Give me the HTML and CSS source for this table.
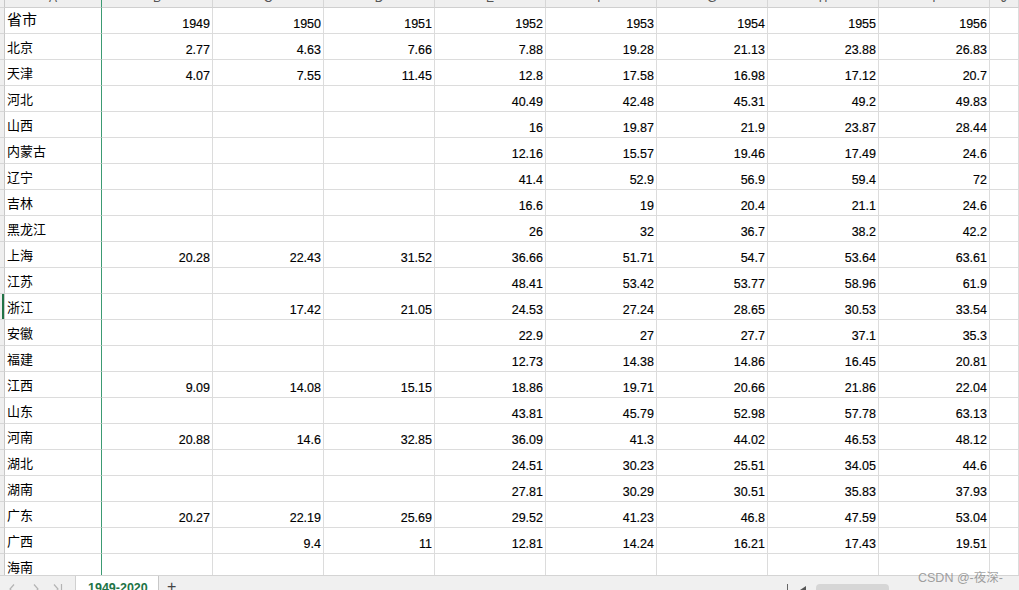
FILE: index.html
```html
<!DOCTYPE html>
<html lang="zh">
<head>
<meta charset="utf-8">
<title>1949-2020</title>
<link rel="stylesheet" href="styles.css">
</head>
<body>
<div class="sheet">
  <div class="h g"></div><div class="h fz"><span>A</span></div><div class="h"><span>B</span></div><div class="h"><span>C</span></div><div class="h"><span>D</span></div><div class="h"><span>E</span></div><div class="h"><span>F</span></div><div class="h"><span>G</span></div><div class="h"><span>H</span></div><div class="h"><span>I</span></div><div class="h"><span>J</span></div>

  <div class="g"></div><div class="a big">省市</div><div class="n">1949</div><div class="n">1950</div><div class="n">1951</div><div class="n">1952</div><div class="n">1953</div><div class="n">1954</div><div class="n">1955</div><div class="n">1956</div><div class="n"></div>
  <div class="g"></div><div class="a">北京</div><div class="n">2.77</div><div class="n">4.63</div><div class="n">7.66</div><div class="n">7.88</div><div class="n">19.28</div><div class="n">21.13</div><div class="n">23.88</div><div class="n">26.83</div><div class="n"></div>
  <div class="g"></div><div class="a">天津</div><div class="n">4.07</div><div class="n">7.55</div><div class="n">11.45</div><div class="n">12.8</div><div class="n">17.58</div><div class="n">16.98</div><div class="n">17.12</div><div class="n">20.7</div><div class="n"></div>
  <div class="g"></div><div class="a">河北</div><div class="n"></div><div class="n"></div><div class="n"></div><div class="n">40.49</div><div class="n">42.48</div><div class="n">45.31</div><div class="n">49.2</div><div class="n">49.83</div><div class="n"></div>
  <div class="g"></div><div class="a">山西</div><div class="n"></div><div class="n"></div><div class="n"></div><div class="n">16</div><div class="n">19.87</div><div class="n">21.9</div><div class="n">23.87</div><div class="n">28.44</div><div class="n"></div>
  <div class="g"></div><div class="a">内蒙古</div><div class="n"></div><div class="n"></div><div class="n"></div><div class="n">12.16</div><div class="n">15.57</div><div class="n">19.46</div><div class="n">17.49</div><div class="n">24.6</div><div class="n"></div>
  <div class="g"></div><div class="a">辽宁</div><div class="n"></div><div class="n"></div><div class="n"></div><div class="n">41.4</div><div class="n">52.9</div><div class="n">56.9</div><div class="n">59.4</div><div class="n">72</div><div class="n"></div>
  <div class="g"></div><div class="a">吉林</div><div class="n"></div><div class="n"></div><div class="n"></div><div class="n">16.6</div><div class="n">19</div><div class="n">20.4</div><div class="n">21.1</div><div class="n">24.6</div><div class="n"></div>
  <div class="g"></div><div class="a">黑龙江</div><div class="n"></div><div class="n"></div><div class="n"></div><div class="n">26</div><div class="n">32</div><div class="n">36.7</div><div class="n">38.2</div><div class="n">42.2</div><div class="n"></div>
  <div class="g"></div><div class="a">上海</div><div class="n">20.28</div><div class="n">22.43</div><div class="n">31.52</div><div class="n">36.66</div><div class="n">51.71</div><div class="n">54.7</div><div class="n">53.64</div><div class="n">63.61</div><div class="n"></div>
  <div class="g"></div><div class="a">江苏</div><div class="n"></div><div class="n"></div><div class="n"></div><div class="n">48.41</div><div class="n">53.42</div><div class="n">53.77</div><div class="n">58.96</div><div class="n">61.9</div><div class="n"></div>
  <div class="g sel"></div><div class="a">浙江</div><div class="n"></div><div class="n">17.42</div><div class="n">21.05</div><div class="n">24.53</div><div class="n">27.24</div><div class="n">28.65</div><div class="n">30.53</div><div class="n">33.54</div><div class="n"></div>
  <div class="g"></div><div class="a">安徽</div><div class="n"></div><div class="n"></div><div class="n"></div><div class="n">22.9</div><div class="n">27</div><div class="n">27.7</div><div class="n">37.1</div><div class="n">35.3</div><div class="n"></div>
  <div class="g"></div><div class="a">福建</div><div class="n"></div><div class="n"></div><div class="n"></div><div class="n">12.73</div><div class="n">14.38</div><div class="n">14.86</div><div class="n">16.45</div><div class="n">20.81</div><div class="n"></div>
  <div class="g"></div><div class="a">江西</div><div class="n">9.09</div><div class="n">14.08</div><div class="n">15.15</div><div class="n">18.86</div><div class="n">19.71</div><div class="n">20.66</div><div class="n">21.86</div><div class="n">22.04</div><div class="n"></div>
  <div class="g"></div><div class="a">山东</div><div class="n"></div><div class="n"></div><div class="n"></div><div class="n">43.81</div><div class="n">45.79</div><div class="n">52.98</div><div class="n">57.78</div><div class="n">63.13</div><div class="n"></div>
  <div class="g"></div><div class="a">河南</div><div class="n">20.88</div><div class="n">14.6</div><div class="n">32.85</div><div class="n">36.09</div><div class="n">41.3</div><div class="n">44.02</div><div class="n">46.53</div><div class="n">48.12</div><div class="n"></div>
  <div class="g"></div><div class="a">湖北</div><div class="n"></div><div class="n"></div><div class="n"></div><div class="n">24.51</div><div class="n">30.23</div><div class="n">25.51</div><div class="n">34.05</div><div class="n">44.6</div><div class="n"></div>
  <div class="g"></div><div class="a">湖南</div><div class="n"></div><div class="n"></div><div class="n"></div><div class="n">27.81</div><div class="n">30.29</div><div class="n">30.51</div><div class="n">35.83</div><div class="n">37.93</div><div class="n"></div>
  <div class="g"></div><div class="a">广东</div><div class="n">20.27</div><div class="n">22.19</div><div class="n">25.69</div><div class="n">29.52</div><div class="n">41.23</div><div class="n">46.8</div><div class="n">47.59</div><div class="n">53.04</div><div class="n"></div>
  <div class="g"></div><div class="a">广西</div><div class="n"></div><div class="n">9.4</div><div class="n">11</div><div class="n">12.81</div><div class="n">14.24</div><div class="n">16.21</div><div class="n">17.43</div><div class="n">19.51</div><div class="n"></div>
  <div class="g"></div><div class="a">海南</div><div class="n"></div><div class="n"></div><div class="n"></div><div class="n"></div><div class="n"></div><div class="n"></div><div class="n"></div><div class="n"></div><div class="n"></div>
</div>

<div class="tabbar">
  <div class="nav">
    <svg class="ic" width="6" height="10" viewBox="0 0 6 10"><path d="M5 0.5 L1 5 L5 9.5" fill="none" stroke="#b4b4b4" stroke-width="1.2"/></svg>
    <svg class="ic" width="6" height="10" viewBox="0 0 6 10"><path d="M1 0.5 L5 5 L1 9.5" fill="none" stroke="#b4b4b4" stroke-width="1.2"/></svg>
    <svg class="ic" width="10" height="10" viewBox="0 0 10 10"><path d="M1 0.5 L5 5 L1 9.5 M8.5 0 V10" fill="none" stroke="#b4b4b4" stroke-width="1.2"/></svg>
  </div>
  <div class="tab">1949-2020</div>
  <div class="plus">+</div>
  <div class="spacer"></div>
  <div class="scroll">
    <div class="vline"></div>
    <svg class="larr" width="6" height="10" viewBox="0 0 6 10"><path d="M6 1 L0 5 L6 9 Z" fill="#555"/></svg>
    <div class="thumb"></div>
  </div>
</div>

<div class="watermark">CSDN @-夜深-</div>
</body>
</html>
```

FILE: styles.css
```css
html, body {
  margin: 0;
  padding: 0;
  background: #fff;
  overflow: hidden;
}

body {
  width: 1019px;
  height: 590px;
  position: relative;
  font-family: "Liberation Sans", Arial, sans-serif;
  color: #000;
}

.sheet {
  display: grid;
  grid-template-columns: 5px 97px repeat(8, 111px) 1fr;
  grid-template-rows: 8px;
  grid-auto-rows: 26px;
  height: 575px;
  overflow: hidden;
}

.sheet > div {
  box-sizing: border-box;
  border-right: 1px solid #dcdcdc;
  border-bottom: 1px solid #dcdcdc;
  min-width: 0;
  overflow: hidden;
  white-space: nowrap;
}

.sheet > .h {
  background: #efefef;
  border-right-color: #d6d6d6;
  border-bottom-color: #cfcfcf;
  font-size: 12px;
  line-height: 12px;
  color: #555;
  text-align: center;
}

.h span {
  display: block;
  margin-top: -8px;
}

.sheet > .g {
  background: #efefef;
  border-right-color: #c8c8c8;
  border-bottom-color: #d6d6d6;
}

.sheet > .sel {
  box-shadow: inset -2px 0 0 #217346;
}

.sheet > .fz,
.sheet > .a {
  border-right-color: #3c9a73;
}

.sheet > .a {
  display: flex;
  align-items: flex-end;
  padding: 0 0 4px 2px;
  font-family: "Noto Sans CJK SC", sans-serif;
  font-size: 13px;
  line-height: 16px;
}

.sheet > .a.big {
  font-size: 15px;
  line-height: 18px;
  padding-bottom: 5px;
}

.sheet > .n {
  display: flex;
  justify-content: flex-end;
  align-items: flex-end;
  padding: 0 2px 1px 0;
  font-size: 12.5px;
  line-height: 15px;
  -webkit-text-stroke: 0.15px #000;
}

.tabbar {
  box-sizing: border-box;
  height: 15px;
  display: flex;
  align-items: flex-start;
  background: #f0f0f0;
  border-top: 1px solid #d4d4d4;
  overflow: hidden;
}

.nav {
  width: 75px;
  display: flex;
  padding: 8px 0 0 9px;
  box-sizing: border-box;
}

.nav .ic {
  margin-right: 18px;
  flex: none;
}

.nav .ic:nth-child(2) {
  margin-right: 14px;
}

.tab {
  box-sizing: border-box;
  width: 84px;
  height: 30px;
  background: #fff;
  border-left: 1px solid #d0d0d0;
  border-right: 1px solid #c8c8c8;
  color: #217346;
  font-weight: bold;
  font-size: 12.5px;
  padding: 5px 0 0 12px;
  line-height: 14px;
}

.plus {
  margin-left: 8px;
  padding-top: 3px;
  font-size: 16px;
  line-height: 16px;
  color: #444;
}

.spacer {
  flex: 1;
}

.scroll {
  width: 232px;
  display: flex;
  align-items: flex-start;
  padding-top: 8px;
}

.vline {
  width: 1px;
  height: 10px;
  background: #666;
}

.larr {
  margin-left: 12px;
  margin-top: 1px;
}

.thumb {
  margin-left: 10px;
  width: 73px;
  height: 14px;
  border-radius: 4px;
  background: #d6d6d6;
}

.watermark {
  position: absolute;
  left: 918px;
  top: 567px;
  font-family: "Liberation Sans", "Noto Sans CJK SC", sans-serif;
  font-size: 12.5px;
  color: rgba(110, 110, 110, 0.65);
  white-space: nowrap;
}
```
